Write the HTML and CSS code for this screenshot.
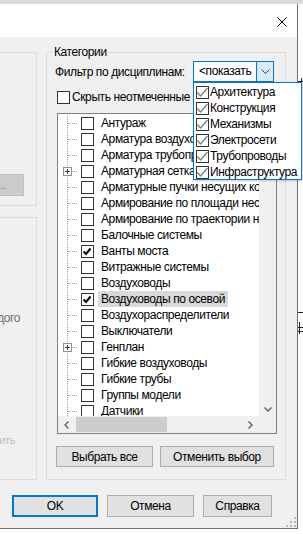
FILE: index.html
```html
<!DOCTYPE html>
<html lang="ru">
<head>
    <meta charset="UTF-8">
    <meta name="viewport" content="width=device-width, initial-scale=1.0">
    <title>Видимость/графика - Категории</title>
    <link rel="stylesheet" href="styles.css">
</head>
<body>
    <div class="top-band"></div>
    <div class="desk">
        <div class="dialog">
            <div class="titlebar">
                <svg class="close" width="10" height="10" viewBox="0 0 10 10">
                    <path d="M0.5 0.5 L9.5 9.5 M9.5 0.5 L0.5 9.5" stroke="#000" stroke-width="1" fill="none"/>
                </svg>
            </div>
            <div class="content">
                <div class="panes">
                    <div class="side">
                        <div class="group upper">
                            <button class="btn-edit" disabled>Изменить...</button>
                        </div>
                        <div class="group lower">
                            <div class="side-text">для каждого</div>
                            <div class="side-faint">Применить</div>
                        </div>
                    </div>

                    <fieldset class="cats">
                        <legend>Категории</legend>
                        <div class="filter-row">
                            <span class="filter-label">Фильтр по дисциплинам:</span>
                            <div class="combo">
                                <span class="combo-text">&lt;показать</span>
                                <span class="combo-btn">
                                    <svg width="9" height="5" viewBox="0 0 9 5">
                                        <path d="M0.5 0.5 L4.5 4.5 L8.5 0.5" stroke="#3c3c3c" fill="none"/>
                                    </svg>
                                </span>
                            </div>
                        </div>
                        <div class="hide-row">
                            <span class="cb"></span>
                            <span>Скрыть неотмеченные категории</span>
                        </div>

                        <div class="listbox">
                            <div class="tree">
                                <div class="row"><span class="twig"></span><span class="cb"></span><span class="label">Антураж</span></div>
                                <div class="row"><span class="twig"></span><span class="cb"></span><span class="label">Арматура воздуховодов</span></div>
                                <div class="row"><span class="twig"></span><span class="cb"></span><span class="label">Арматура трубопроводов</span></div>
                                <div class="row"><span class="twig"><span class="plus"></span></span><span class="cb"></span><span class="label">Арматурная сетка</span></div>
                                <div class="row"><span class="twig"></span><span class="cb"></span><span class="label">Арматурные пучки несущих конструкций</span></div>
                                <div class="row"><span class="twig"></span><span class="cb"></span><span class="label">Армирование по площади несущих конструкций</span></div>
                                <div class="row"><span class="twig"></span><span class="cb"></span><span class="label">Армирование по траектории несущих конструкций</span></div>
                                <div class="row"><span class="twig"></span><span class="cb"></span><span class="label">Балочные системы</span></div>
                                <div class="row"><span class="twig"></span><span class="cb on"></span><span class="label">Ванты моста</span></div>
                                <div class="row"><span class="twig"></span><span class="cb"></span><span class="label">Витражные системы</span></div>
                                <div class="row"><span class="twig"></span><span class="cb"></span><span class="label">Воздуховоды</span></div>
                                <div class="row sel"><span class="twig"></span><span class="cb on"></span><span class="label">Воздуховоды по осевой</span></div>
                                <div class="row"><span class="twig"></span><span class="cb"></span><span class="label">Воздухораспределители</span></div>
                                <div class="row"><span class="twig"></span><span class="cb"></span><span class="label">Выключатели</span></div>
                                <div class="row"><span class="twig"><span class="plus"></span></span><span class="cb"></span><span class="label">Генплан</span></div>
                                <div class="row"><span class="twig"></span><span class="cb"></span><span class="label">Гибкие воздуховоды</span></div>
                                <div class="row"><span class="twig"></span><span class="cb"></span><span class="label">Гибкие трубы</span></div>
                                <div class="row"><span class="twig"></span><span class="cb"></span><span class="label">Группы модели</span></div>
                                <div class="row"><span class="twig"></span><span class="cb"></span><span class="label">Датчики</span></div>
                            </div>
                            <div class="vscroll">
                                <svg width="8" height="5" viewBox="0 0 8 5">
                                    <path d="M0.5 0.5 L4 4 L7.5 0.5" stroke="#606060" stroke-width="1.4" fill="none"/>
                                </svg>
                            </div>
                            <div class="hscroll">
                                <span class="arrow">
                                    <svg width="5" height="8" viewBox="0 0 5 8">
                                        <path d="M4.5 0.5 L1 4 L4.5 7.5" stroke="#606060" stroke-width="1.4" fill="none"/>
                                    </svg>
                                </span>
                                <span class="thumb"></span>
                                <span class="arrow right">
                                    <svg width="5" height="8" viewBox="0 0 5 8">
                                        <path d="M0.5 0.5 L4 4 L0.5 7.5" stroke="#606060" stroke-width="1.4" fill="none"/>
                                    </svg>
                                </span>
                            </div>
                            <div class="corner"></div>
                        </div>

                        <div class="select-row">
                            <button class="btn sel-all">Выбрать все</button>
                            <button class="btn sel-none">Отменить выбор</button>
                        </div>
                    </fieldset>
                </div>

                <div class="footer">
                    <button class="btn ok">OK</button>
                    <button class="btn cancel">Отмена</button>
                    <button class="btn help">Справка</button>
                </div>
                <svg class="grip" width="10" height="10" viewBox="0 0 10 10">
                    <rect x="8" y="0" width="2" height="2" fill="#b8b8b8"/>
                    <rect x="4" y="4" width="2" height="2" fill="#b8b8b8"/>
                    <rect x="8" y="4" width="2" height="2" fill="#b8b8b8"/>
                    <rect x="0" y="8" width="2" height="2" fill="#b8b8b8"/>
                    <rect x="4" y="8" width="2" height="2" fill="#b8b8b8"/>
                    <rect x="8" y="8" width="2" height="2" fill="#b8b8b8"/>
                </svg>
            </div>
        </div>

        <!-- кусок чертежа за окном -->
        <div class="drawing">
            <span class="ln h" style="top: 77px;"></span>
            <span class="ln v" style="top: 74px; left: 3px; height: 7px;"></span>
            <span class="ln h" style="top: 308px;"></span>
            <span class="ln v" style="top: 318px; left: 1px; height: 12px;"></span>
            <span class="ln h" style="top: 323px;"></span>
            <span class="ln h" style="top: 327px;"></span>
        </div>
    </div>

    <!-- раскрытый список дисциплин -->
    <div class="dropdown">
        <div class="opt"><span class="cb on"></span>Архитектура</div>
        <div class="opt"><span class="cb on"></span>Конструкция</div>
        <div class="opt"><span class="cb on"></span>Механизмы</div>
        <div class="opt"><span class="cb on"></span>Электросети</div>
        <div class="opt"><span class="cb on"></span>Трубопроводы</div>
        <div class="opt"><span class="cb on"></span>Инфраструктура</div>
    </div>
</body>
</html>
```

FILE: styles.css
```css
* {
    box-sizing: border-box;
}

body {
    margin: 0;
    width: 303px;
    height: 534px;
    overflow: hidden;
    position: relative;
    background-color: #fff;
    font-family: "Liberation Sans", Arial, sans-serif;
    font-size: 12px;
    letter-spacing: -0.4px;
    color: #000;
}

.top-band {
    height: 4px;
    background-color: #dadada;
}

.desk {
    display: flex;
}

.dialog {
    width: 298px;
    height: 525px;
    flex-shrink: 0;
    display: flex;
    flex-direction: column;
    background-color: #f0f0f0;
    border-right: 1px solid #6f6f6f;
    border-bottom: 1px solid #6f6f6f;
}

.titlebar {
    height: 33px;
    background-color: #fff;
    display: flex;
    justify-content: flex-end;
    align-items: flex-start;
    padding: 13px 10px 0 0;
}

.content {
    flex: 1;
    position: relative;
}

.panes {
    display: flex;
    align-items: flex-start;
}

/* левая часть диалога, уходит за край */
.side {
    width: 46px;
    flex-shrink: 0;
}

.group {
    width: 157px;
    margin-left: -120px;
    border: 1px solid #dcdcdc;
}

.group.upper {
    margin-top: 15px;
    height: 154px;
}

.group.lower {
    margin-top: 11px;
    height: 263px;
}

.btn-edit {
    display: block;
    width: 143px;
    height: 22px;
    margin-top: 121px;
    padding: 0 17px 0 0;
    text-align: right;
    white-space: nowrap;
    font: inherit;
    letter-spacing: inherit;
    color: #838383;
    background-color: #cccccc;
    border: 1px solid #bfbfbf;
}

.side-text {
    margin-top: 93px;
    padding-right: 16px;
    text-align: right;
    line-height: 14px;
    color: #6d6d6d;
    white-space: nowrap;
}

.side-faint {
    margin-top: 108px;
    padding-right: 21px;
    text-align: right;
    line-height: 14px;
    font-size: 11px;
    color: #c0c0c0;
    white-space: nowrap;
}

/* группа Категории */
.cats {
    width: 240px;
    min-width: 0;
    margin: 8px 0 0 0;
    padding: 0 8px 12px 10px;
    border: 1px solid #dcdcdc;
}

.cats legend {
    margin-left: -5px;
    padding: 0 2px;
    line-height: 14px;
}

.filter-row {
    display: flex;
    align-items: center;
    justify-content: space-between;
    height: 21px;
    margin-top: 2px;
}

.filter-label {
    margin-left: -2px;
    white-space: nowrap;
}

.combo {
    display: flex;
    width: 81px;
    height: 21px;
    margin-right: 3px;
    background-color: #fff;
    border: 1px solid #0078d7;
}

.combo-text {
    flex: 1;
    padding-left: 5px;
    line-height: 19px;
    white-space: nowrap;
    overflow: hidden;
}

.combo-btn {
    width: 17px;
    display: flex;
    align-items: center;
    justify-content: center;
    background-color: #d9ebf9;
    border-left: 1px solid #0078d7;
}

.hide-row {
    display: flex;
    align-items: center;
    gap: 2px;
    height: 16px;
    margin-top: 7px;
    white-space: nowrap;
}

.cb {
    width: 13px;
    height: 13px;
    flex-shrink: 0;
    display: inline-flex;
    align-items: center;
    justify-content: center;
    background-color: #fff;
    border: 1px solid #333;
}

/* список категорий */
.listbox {
    display: grid;
    grid-template-columns: 1fr 17px;
    grid-template-rows: 1fr 17px;
    height: 321px;
    margin-top: 8px;
    background-color: #fff;
    border: 1px solid #828282;
}

.tree {
    padding-top: 1px;
    overflow: hidden;
}

.row {
    display: flex;
    align-items: center;
    height: 16px;
    white-space: nowrap;
}

.twig {
    width: 23px;
    height: 16px;
    flex-shrink: 0;
    display: flex;
    align-items: center;
    background:
        repeating-linear-gradient(to bottom, #a0a0a0 0 1px, transparent 1px 2px) 9px 0 / 1px 100% no-repeat,
        repeating-linear-gradient(to right, #a0a0a0 0 1px, transparent 1px 2px) 10px 8px / 10px 1px no-repeat;
}

.plus {
    width: 9px;
    height: 9px;
    margin-left: 5px;
    border: 1px solid #919191;
    background:
        linear-gradient(#2b3d6b, #2b3d6b) center / 5px 1px no-repeat,
        linear-gradient(#2b3d6b, #2b3d6b) center / 1px 5px no-repeat,
        #fff;
}

.row .cb.on {
    background:
        url("data:image/svg+xml,%3Csvg xmlns='http://www.w3.org/2000/svg' width='11' height='11'%3E%3Cpath d='M1.5 5.5 L4 8 L8.5 2.5' stroke='%23000' stroke-width='2' fill='none'/%3E%3C/svg%3E") center no-repeat,
        #fff;
}

.label {
    margin-left: 4px;
    padding: 0 3px;
    line-height: 16px;
}

.row.sel .label {
    background-color: #d9d9d9;
}

.vscroll {
    display: flex;
    align-items: flex-end;
    justify-content: center;
    padding-bottom: 4px;
    background-color: #f0f0f0;
}

.hscroll {
    display: flex;
    align-items: center;
    background-color: #f0f0f0;
}

.hscroll .arrow {
    width: 17px;
    height: 17px;
    display: flex;
    align-items: center;
    justify-content: center;
}

.hscroll .arrow.right {
    margin-left: auto;
}

.hscroll .thumb {
    width: 91px;
    height: 15px;
    margin-left: 1px;
    background-color: #cdcdcd;
}

.corner {
    background-color: #f0f0f0;
}

/* кнопки */
.btn {
    height: 22px;
    padding: 0;
    font: inherit;
    letter-spacing: inherit;
    color: #000;
    background-color: #e1e1e1;
    border: 1px solid #adadad;
}

.select-row {
    display: flex;
    justify-content: space-between;
    margin: 12px 3px 0 -1px;
}

.select-row .btn {
    height: 21px;
}

.sel-all {
    width: 97px;
}

.sel-none {
    width: 114px;
}

.footer {
    display: flex;
    gap: 9px;
    margin-top: 15px;
    padding-left: 12px;
}

.ok {
    width: 86px;
    border: 2px solid #0078d7;
}

.cancel {
    width: 87px;
}

.help {
    width: 69px;
}

.grip {
    position: absolute;
    right: 1px;
    bottom: 1px;
}

/* раскрытый список */
.dropdown {
    position: absolute;
    left: 193px;
    top: 82px;
    width: 109px;
    height: 98px;
    padding: 1px 0 0 1px;
    background-color: #fff;
    border: 1px solid #0078d7;
    box-shadow: 1px 1px 2px rgba(0, 0, 0, 0.2);
}

.opt {
    display: flex;
    align-items: center;
    gap: 1px;
    height: 16px;
    white-space: nowrap;
}

.opt .cb {
    margin-left: 1px;
}

.opt .cb.on {
    background:
        url("data:image/svg+xml,%3Csvg xmlns='http://www.w3.org/2000/svg' width='11' height='11'%3E%3Cpath d='M0.5 5.5 L3.5 9 L10.5 1' stroke='%23777' stroke-width='1.2' fill='none'/%3E%3C/svg%3E") center no-repeat,
        #fff;
}

/* чертёж справа */
.drawing {
    flex: 1;
    position: relative;
}

.ln {
    position: absolute;
    background-color: #222;
}

.ln.h {
    left: 0;
    right: 0;
    height: 1px;
}

.ln.v {
    width: 1px;
}
```
